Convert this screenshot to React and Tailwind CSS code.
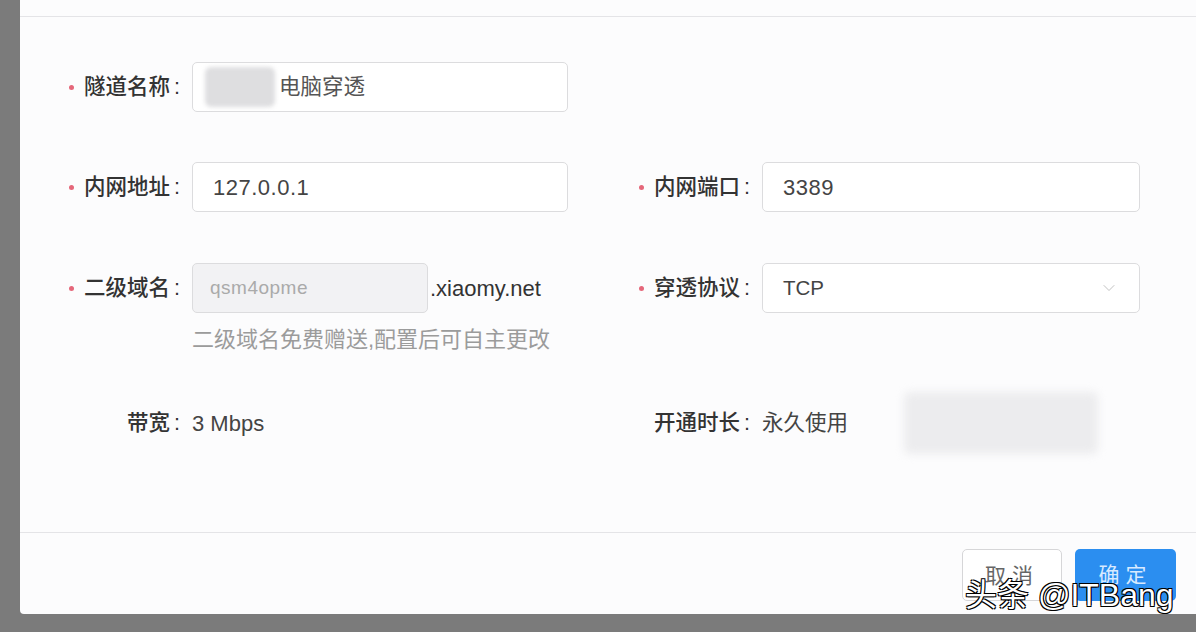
import { ChevronDown } from 'lucide-react';

const font = "font-['Liberation_Sans','Noto_Sans_CJK_SC',sans-serif]";

function Label({ text, required }) {
  return (
    <div className="flex w-[132px] shrink-0 items-center justify-end pr-[12px] text-[21.5px] font-medium text-[#333]">
      {required && <span className="mr-[10px] h-[5px] w-[5px] rounded-full bg-[#e5677a]" />}
      <span>{text}</span>
      <span className="ml-[4px]">:</span>
    </div>
  );
}

function Field({ children, className = '' }) {
  return (
    <div
      className={`flex h-[50px] items-center rounded-[5px] border border-[#dcdcde] bg-white px-[20px] text-[22px] text-[#444] ${className}`}
    >
      {children}
    </div>
  );
}

export default function App() {
  return (
    <div className={`relative h-[632px] w-[1196px] overflow-hidden bg-[#7b7b7b] ${font}`}>
      <div className="ml-[20px] flex h-[614px] flex-col rounded-bl-[4px] bg-[#fcfcfd]">
        <div className="h-[17px] shrink-0 border-b border-[#e4e4e7]" />

        <div className="flex-1 pl-[40px] pt-[45px]">
          {/* row 1 */}
          <div className="flex h-[50px]">
            <Label text="隧道名称" required />
            <Field className="w-[376px] pl-[12px]">
              <span className="mr-[4px] h-[40px] w-[70px] rounded-[6px] bg-[#dedee0] blur-[2px]" />
              <span className="text-[21.5px] text-[#555]">电脑穿透</span>
            </Field>
          </div>

          {/* row 2 */}
          <div className="mt-[50px] grid grid-cols-[508px_510px] gap-x-[62px]">
            <div className="flex h-[50px]">
              <Label text="内网地址" required />
              <Field className="w-[376px] tracking-[0.5px]">127.0.0.1</Field>
            </div>
            <div className="flex h-[50px]">
              <Label text="内网端口" required />
              <Field className="w-[378px] tracking-[0.5px]">3389</Field>
            </div>
          </div>

          {/* row 3 */}
          <div className="mt-[51px] grid grid-cols-[508px_510px] gap-x-[62px]">
            <div>
              <div className="flex h-[50px]">
                <Label text="二级域名" required />
                <div className="flex h-[50px] w-[236px] items-center rounded-[5px] border border-[#dcdcde] bg-[#f2f2f4] pl-[17px] text-[19px] tracking-[0.5px] text-[#aaa]">
                  qsm4opme
                </div>
                <span className="ml-[2px] self-center text-[22px] text-[#333]">.xiaomy.net</span>
              </div>
              <p className="ml-[132px] mt-[12px] text-[22px] leading-[30px] text-[#9b9b9b]">
                二级域名免费赠送,配置后可自主更改
              </p>
            </div>
            <div className="flex h-[50px]">
              <Label text="穿透协议" required />
              <Field className="w-[378px] justify-between pr-[20px]">
                <span className="text-[20.5px]">TCP</span>
                <ChevronDown size={20} strokeWidth={1} className="text-[#b5b5b5]" />
              </Field>
            </div>
          </div>

          {/* row 4 */}
          <div className="mt-[42px] grid grid-cols-[508px_510px] gap-x-[62px]">
            <div className="flex h-[52px] items-center">
              <Label text="带宽" />
              <span className="text-[22px] text-[#444]">3 Mbps</span>
            </div>
            <div className="flex h-[52px] items-center">
              <Label text="开通时长" />
              <span className="text-[21.5px] text-[#444]">永久使用</span>
              <span className="ml-[56px] h-[62px] w-[194px] rounded-[6px] bg-[#ececee] blur-[4px]" />
            </div>
          </div>
        </div>

        <div className="flex h-[82px] shrink-0 items-start justify-end gap-[13px] border-t border-[#e4e4e7] pr-[20px] pt-[16px]">
          <button className="flex h-[52px] w-[100px] items-start justify-center rounded-[5px] border border-[#d6d6d8] bg-white pt-[10px] text-[21px] tracking-[6px] text-[#666]">
            取消
          </button>
          <button className="flex h-[52px] w-[101px] items-start justify-center rounded-[5px] bg-[#2b8ef0] pt-[10px] text-[21px] tracking-[6px] text-[#d8eaff]">
            确定
          </button>
        </div>
      </div>

      <div className="absolute left-[965px] top-[577px] text-[32px] leading-[36px] text-white [text-shadow:-1px_-1px_0_#000,1px_-1px_0_#000,-1px_1px_0_#000,1px_1px_0_#000]">
        头条 @ITBang
      </div>
    </div>
  );
}
